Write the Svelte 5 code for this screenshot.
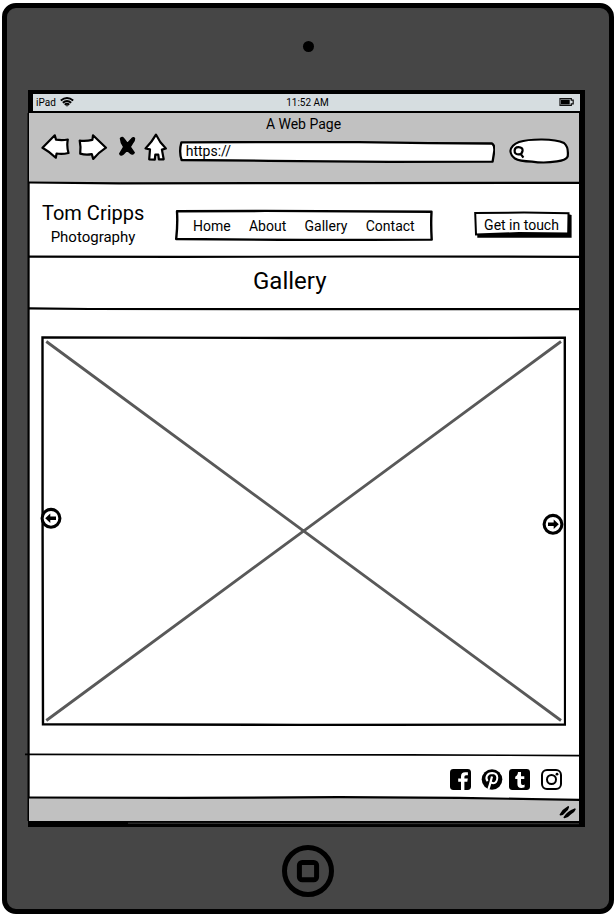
<script>
  const links = ['Home', 'About', 'Gallery', 'Contact'];
</script>

<div class="device">
  <div class="camera"></div>

  <div class="screen">
    <div class="status">
      <span class="carrier">iPad
        <svg width="14" height="10" viewBox="0 0 14 10" fill="none" stroke="#000" stroke-width="1.9">
          <path d="M.8 3.5Q7-1.5 13.2 3.5M2.8 5.7Q7 2.2 11.2 5.7M4.7 7.7Q7 5.8 9.3 7.7" />
          <path d="M5.7 8.2L7 9.7L8.3 8.2Z" fill="#000" stroke="none" />
        </svg>
      </span>
      <span class="time">11:52 AM</span>
      <svg class="battery" width="15" height="8" viewBox="0 0 15 8">
        <path d="M1 .6H12.3V2.2H14.2V5.8H12.3V7.4H1Z" fill="none" stroke="#111" stroke-width="1.2" />
        <rect x="2" y="1.7" width="8.7" height="4.7" />
      </svg>
    </div>

    <div class="page">
      <div class="browser">
        <div class="page-title">A Web Page</div>
        <div class="tools">
          <svg class="icons" width="128" height="30" viewBox="0 0 128 30" fill="#fff" stroke="#000" stroke-width="2.2" stroke-linejoin="round">
            <path d="M1.5 14.8L13.8 2.3L15 6.6Q21 7.5 26.8 6.5Q25.5 13.3 27.5 20Q21 21.5 15.6 20.5L14.8 24.7Q8.5 18.8 1.5 14.8Z" />
            <path d="M38.7 7.6Q45 8.3 51.4 6.9L52 2.3L65 14.7Q58 19.3 52.2 25.9L50.8 21.1Q45 22.3 39.2 20.6Q40 13.8 38.7 7.6Z" />
            <path d="M79.5 5.5Q81.5 3.1 83.2 6.2L86.4 10.5L90.3 6.3Q92.6 3.7 93.5 5.5Q93.8 7.5 91.2 10.5L89.2 13.9L93.2 19.6Q91.6 22.2 89.5 20.3L86 17.2L82.1 21.2Q79.6 23 78.8 20.7L82.8 14Q79.8 10.5 79.5 5.5Z" fill="#000" stroke-width="1.5" />
            <path d="M115 1.6Q118.5 9.3 124.9 15.5L120.9 16.6L122.7 26.3L117.9 26.3L117.3 21.7L114.3 21.7L113.8 26.7L108.2 26.3L109 16.4L104.5 15.5Q111 8.8 115 1.6Z" />
          </svg>
          <div class="url">
            <svg class="sketch" viewBox="0 0 316 22" fill="#fff" stroke="#000" stroke-width="2.3">
              <path d="M2.4 1.3L90 1L180 1.2L250 2.2L313 2.5Q315.8 4 315.3 10L313.6 20.6L210 20.8L90 19.8L2.6 19Q-.2 11 2.4 1.3Z" stroke-linejoin="round" />
            </svg>
            <span>https://</span>
          </div>
          <svg class="search" width="60" height="26" viewBox="0 0 60 26">
            <path d="M1.4 13Q2 7.2 10 4Q18 1.4 33 1.5Q48 1.6 55 5Q59.8 9 58.7 18.5Q57 22.3 48 23.4Q35 25.5 23 23.6Q10 23.2 6 20.5Q1.8 17.5 1.4 13Z" fill="#fff" stroke="#000" stroke-width="2.2" />
            <path d="M5.6 12.6Q5.8 9 9.5 9.1Q13.9 9.4 13.6 12.8Q12.8 16.7 9.3 16.4Q5.5 16.2 5.6 12.6M11.4 15.3L14.4 19.6" fill="none" stroke="#000" stroke-width="2.2" />
          </svg>
        </div>
        <svg class="rule" viewBox="0 0 551 4" preserveAspectRatio="none"><path d="M0 1.5L90 2.3L330 2.1L551 1.8" /></svg>
      </div>

      <header>
        <div class="brand"><div class="name">Tom Cripps</div><div class="sub">Photography</div></div>
        <nav>
          <svg class="sketch" viewBox="0 0 258 32" fill="none" stroke="#000" stroke-width="2.4" stroke-linejoin="round">
            <path d="M2 2.2L90 1.9L256.5 2.8Q255.8 16 256.7 30.6L130 31L1.2 30Q2.8 15 2 2.2Z" />
          </svg>
          {#each links as link}<span>{link}</span>{/each}
        </nav>
        <button>
          <svg class="sketch" viewBox="0 0 99 28">
            <path d="M3.3 4L94 3L97.6 4V26.7H3.3Z" />
            <path d="M1.2 2L50 1.6L94.5 2.2L94.2 22.6L45 22L2 23.5Z" fill="#fff" stroke="#000" stroke-width="2" />
          </svg>
          <span>Get in touch</span>
        </button>
        <svg class="rule" viewBox="0 0 551 4" preserveAspectRatio="none"><path d="M0 1.7L150 1.9L330 1.5L551 1.8" /></svg>
      </header>

      <div class="heading">
        <h1>Gallery</h1>
        <svg class="rule" viewBox="0 0 551 4" preserveAspectRatio="none"><path d="M0 1.3L60 2L320 2.1L551 2.2" /></svg>
      </div>

      <main>
        <div class="picture">
          <svg class="sketch" viewBox="0 0 525 390" fill="none">
            <path d="M5.3 5.5L520 384.5M520 5.5L5.3 384.5" stroke="#595959" stroke-width="2.8" />
            <path d="M1.5 1.4L250 2L523.8 1.8L524.1 388.6L260 388.9L2 388.2L1.6 200Z" stroke="#000" stroke-width="2.4" />
          </svg>
          <svg class="arrow prev" width="22" height="22" viewBox="0 0 22 22">
            <circle cx="11" cy="11.3" r="8.9" fill="#fff" stroke="#000" stroke-width="3.1" />
            <path d="M5.2 11.3L10.3 6.5V9.5H16V13.1H10.3V16.1Z" />
          </svg>
          <svg class="arrow next" width="22" height="22" viewBox="0 0 22 22">
            <circle cx="11" cy="11.3" r="8.9" fill="#fff" stroke="#000" stroke-width="3.1" />
            <path d="M16.8 11.3L11.7 6.5V9.5H6V13.1H11.7V16.1Z" />
          </svg>
        </div>
        <svg class="rule thin" viewBox="0 0 551 4" preserveAspectRatio="none"><path d="M-4 1.4L180 1.7L380 1.9L551 2.6" /></svg>
      </main>

      <footer>
        <svg width="21" height="21" viewBox="0 0 21 21">
          <rect width="21" height="21" rx="3.4" />
          <path d="M11 21V12.8H8.2V9.6H11V7.2Q11 3.2 15.2 3.2H17.9V6.3H16Q14.4 6.3 14.4 7.8V9.6H17.8L17.3 12.8H14.4V21Z" fill="#fff" />
        </svg>
        <svg width="22" height="21" viewBox="0 0 22 21" fill="none">
          <circle cx="11" cy="10.5" r="10.3" fill="#000" />
          <path d="M6.6 12.2Q4.5 9.5 6 6.8Q7.5 4.1 11.2 4.1Q16.2 4.3 16.3 8.8Q16 14.1 12.2 14.2Q10.4 14.1 9.7 12.8" stroke="#fff" stroke-width="2" />
          <path d="M11 7.5Q9.4 14.5 7.4 20.3" stroke="#fff" stroke-width="2.2" />
        </svg>
        <svg width="21" height="21" viewBox="0 0 21 21">
          <rect width="21" height="21" rx="3.4" />
          <path d="M9 3H12V7.2H15.3V10.1H12V14.1Q12 16 13.5 16Q14.6 16 15.6 15.4V18.2Q14 19 12.3 19Q8.4 19 8.4 15V10.1H6.2V7.7Q8.7 6.8 9 3Z" fill="#fff" />
        </svg>
        <svg width="21" height="21" viewBox="0 0 21 21" fill="none" stroke="#000" stroke-width="2">
          <rect x="1" y="1" width="19" height="19" rx="5" />
          <circle cx="10.5" cy="10.5" r="4.5" />
          <circle cx="16" cy="5.2" r="1.4" fill="#000" stroke="none" />
        </svg>
        <svg class="rule" viewBox="0 0 551 4" preserveAspectRatio="none"><path d="M0 1.5L150 1.9L310 1.2L430 1.8L551 4" /></svg>
      </footer>

      <div class="bottom">
        <svg width="18" height="14" viewBox="0 0 18 14" fill="#000" stroke="#000" stroke-width="1.8" stroke-linejoin="round">
          <path d="M1.5 9.6Q4.3 4.6 9.2 2Q8.8 4.4 6 6.6Q4 9.3 1.5 9.6ZM5.4 12.4Q8.7 6.8 15.8 4.3Q15 6.8 11.7 8.4Q8.8 11.8 5.4 12.4Z" />
        </svg>
      </div>
    </div>
    <svg class="base" viewBox="0 0 557 6" preserveAspectRatio="none"><path d="M100 2.2L300 2.6L551 2.7" /></svg>
  </div>

  <svg class="home" width="52" height="52" viewBox="0 0 52 52" fill="none" stroke="#000" stroke-width="5">
    <circle cx="26" cy="26" r="23.5" />
    <rect x="17.4" y="17.4" width="17.2" height="17.4" rx="2.8" />
  </svg>
</div>

<style>
  :global(body) { margin: 0; background: #fff; }
  .device {
    box-sizing: border-box; width: 612px; height: 911px; margin: 3px 0 0 2px;
    border: 5px solid #000; border-radius: 14px; background: #464646;
    font-family: Roboto, sans-serif; color: #000;
    display: flex; flex-direction: column; align-items: center; overflow: hidden;
  }
  svg { display: block; flex: none; }
  .camera { width: 11px; height: 11px; border-radius: 50%; background: #000; margin: 32.5px 0 38.5px; flex: none; }
  .screen { width: 557px; height: 737px; flex: none; background: #000; margin-right: 3px; display: flex; flex-direction: column; }
  .status {
    height: 16.5px; flex: none; margin: 4px 5px 2px; background: #d6dde0; font-size: 10px;
    display: grid; grid-template-columns: 1fr auto 1fr; align-items: center; padding: 0 6px 0 3px;
  }
  .carrier { display: flex; align-items: center; gap: 4px; }
  .time { margin-left: 5px; }
  .battery { justify-self: end; }
  .page { width: 550px; margin-left: 1px; background: #fff; display: flex; flex-direction: column; flex: none; box-shadow: -1.5px 0 #000, inset 1px 0 #555; }
  .browser, header, .heading, main, footer, .bottom { position: relative; flex: none; box-sizing: border-box; }
  .rule { position: absolute; left: 0; bottom: -2px; width: 551px; height: 4px; overflow: visible; fill: none; stroke: #000; stroke-width: 2.2; z-index: 1; }
  .thin { stroke-width: 1.6; }
  .sketch { position: absolute; inset: 0; width: 100%; height: 100%; }
  .browser { height: 70.5px; background: #c1c1c1; }
  .page-title { text-align: center; font-size: 14px; line-height: 16px; padding-top: 3px; margin-right: 1px; }
  .tools { display: flex; align-items: flex-start; padding-left: 12px; }
  .icons { margin-top: 1px; }
  .url { position: relative; width: 316px; height: 22px; margin: 9px 0 0 10px; font-size: 14px; line-height: 21px; }
  .url span { position: relative; left: 6.7px; }
  .search { margin: 6px 0 0 14px; }
  header { height: 73.5px; display: flex; align-items: flex-start; padding-left: 13px; }
  .brand { width: 102px; text-align: center; padding-top: 18px; white-space: nowrap; }
  .name { font-size: 20px; line-height: 24px; }
  .sub { font-size: 15px; line-height: 24px; }
  nav { position: relative; box-sizing: border-box; width: 258px; height: 32px; margin: 26px 0 0 31px; padding: 2px 0 0 18px; display: flex; gap: 18.3px; align-items: center; font-size: 14px; }
  nav span { position: relative; }
  button { position: relative; width: 99px; height: 28px; margin: 28px 0 0 41px; padding: 0 4px 0 0; border: 0; background: none; font: 14px Roboto, sans-serif; color: #000; white-space: nowrap; }
  button span { position: relative; }
  .heading { height: 52.5px; }
  h1 { margin: 0; padding: 10px 28.5px 0 0; text-align: center; font-size: 24px; line-height: 28px; font-weight: 400; }
  main { height: 445.5px; padding: 27px 0 0 12px; }
  .picture { position: relative; width: 525px; height: 390px; }
  .arrow { position: absolute; }
  .prev { left: -1px; top: 171px; }
  .next { left: 501px; top: 177px; }
  footer { height: 43.5px; display: flex; padding: 14px 0 0 421px; }
  footer svg:nth-of-type(2) { margin-left: 10px; }
  footer svg:nth-of-type(3) { margin-left: 6px; }
  footer svg:nth-of-type(4) { margin-left: 11px; }
  .bottom { height: 23px; background: #c1c1c1; }
  .bottom svg { margin: 7px 0 0 530px; }
  .base { width: 557px; height: 6px; fill: none; stroke: #555; stroke-width: .7; }
  .home { margin-top: 18px; }
</style>
